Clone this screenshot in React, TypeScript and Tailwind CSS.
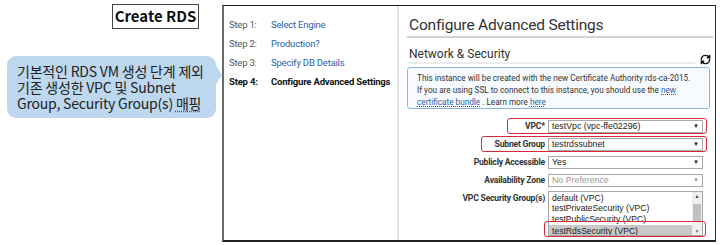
import React from 'react';
import { RefreshCw } from 'lucide-react';

const steps = [
    { label: 'Step 1:', text: 'Select Engine', active: false },
    { label: 'Step 2:', text: 'Production?', active: false },
    { label: 'Step 3:', text: 'Specify DB Details', active: false },
    { label: 'Step 4:', text: 'Configure Advanced Settings', active: true },
];

function Select({ value, disabled }: { value: string; disabled?: boolean }) {
    return (
        <div className="w-[155px] h-[13px] border border-[#a9a9a9] bg-white flex items-center justify-between pl-[3px] pr-[3px]">
            <span className={`text-[8.8px] leading-none font-['Liberation_Sans',Arial,sans-serif] ${disabled ? 'text-[#9a9a9a]' : 'text-[#222]'}`}>{value}</span>
            <span className={`text-[6px] leading-none ${disabled ? 'text-[#999]' : 'text-[#222]'}`}>▼</span>
        </div>
    );
}

function Row({ label, children, mark }: { label: string; children: React.ReactNode; mark?: string }) {
    return (
        <div className="relative flex items-center h-[18px]">
            <div className="w-[141px] pr-[3px] text-right text-[8.6px] font-bold tracking-[-0.2px] text-[#333] font-['Roboto',sans-serif]">
                {label}
            </div>
            {children}
            {mark && <div className={`absolute top-[1px] h-[16px] right-[6px] border border-[#d42b3a] rounded-[3px] ${mark}`} />}
        </div>
    );
}

export default function App() {
    return (
        <div className="w-[720px] h-[245px] bg-white flex overflow-hidden">
            <div className="w-[222px] flex flex-col shrink-0">
                <div className="ml-[112px] mt-[4px] w-[87px] h-[25px] border border-[#444] flex items-center justify-center text-[15px] font-bold text-[#111] font-['Noto_Sans_CJK_KR','Noto_Sans',sans-serif]">
                    Create RDS
                </div>
                <div className="relative ml-[7px] mt-[27px] w-[209px] h-[62px] rounded-[9px] bg-[#bdd7ee] pl-[10px] pt-[7px] text-[14px] leading-[16px] tracking-[-0.2px] text-[#222] font-['Noto_Sans_CJK_KR',sans-serif]">
                    <div>기본적인 RDS VM 생성 단계 제외</div>
                    <div>기존 생성한 VPC 및 Subnet</div>
                    <div>
                        Group, Security Group(s){' '}
                        <span className="underline decoration-dotted decoration-[#e02020] underline-offset-2">매핑</span>
                    </div>
                    <div className="absolute right-[-6px] top-[8px] w-0 h-0 border-y-[11px] border-y-transparent border-l-[7px] border-l-[#bdd7ee]" />
                </div>
            </div>

            <div className="mt-[5px] w-[494px] h-[237px] border-l-2 border-l-[#6b6b6b] border-t border-t-[#222] border-r border-r-[#333] border-b-2 border-b-[#222] flex font-['Roboto',sans-serif]">
                <div className="w-[175px] border-r-2 border-r-[#e4e4e4] pt-[9px] pl-[5px]">
                    {steps.map(s => (
                        <div key={s.label} className="flex items-center h-[19.3px] text-[9.5px] tracking-[-0.2px]">
                            <span className={`w-[42px] ${s.active ? 'font-bold text-[#111]' : 'text-[#555]'}`}>{s.label}</span>
                            <span className={s.active ? 'font-bold text-[#111]' : 'text-[#2b5fa5]'}>{s.text}</span>
                        </div>
                    ))}
                </div>

                <div className="flex-1 pl-[8px] pr-[2px]">
                    <div className="pl-[2px] pt-[9px] pb-[1px] border-b-2 border-b-[#d2d2d2] text-[15.5px] leading-[20px] tracking-[-0.2px] text-[#333]">
                        Configure Advanced Settings
                    </div>

                    <div className="flex items-end mt-[8px]">
                        <div className="flex-1 h-[18px] border-b-2 border-b-[#ececec] pl-[2px] text-[12px] leading-[16px] text-[#333]">
                            Network &amp; Security
                        </div>
                        <RefreshCw className="w-[11px] h-[11px] ml-[5px] mr-[2px] mb-[-1px] text-[#111]" strokeWidth={3.2} />
                    </div>

                    <div className="mt-[3px] w-[303px] h-[42px] border border-[#8db3df] rounded-[3px] bg-[#f7fbff] pl-[9px] pt-[4px] text-[8.2px] leading-[12px] text-[#333]">
                        <div>This instance will be created with the new Certificate Authority rds-ca-2015.</div>
                        <div>
                            If you are using SSL to connect to this instance, you should use the{' '}
                            <span className="text-[#2b5fa5] underline decoration-dotted">new</span>
                        </div>
                        <div>
                            <span className="text-[#2b5fa5] underline decoration-dotted">certificate bundle</span> . Learn more{' '}
                            <span className="text-[#2b5fa5] underline decoration-dotted">here</span>
                        </div>
                    </div>

                    <div className="mt-[8px]">
                        <Row label="VPC*" mark="left-[100px]">
                            <Select value="testVpc (vpc-ffe02296)" />
                        </Row>
                        <Row label="Subnet Group" mark="left-[74px]">
                            <Select value="testrdssubnet" />
                        </Row>
                        <Row label="Publicly Accessible">
                            <Select value="Yes" />
                        </Row>
                        <Row label="Availability Zone">
                            <Select value="No Preference" disabled />
                        </Row>
                        <div className="relative flex items-start mt-[2px]">
                            <div className="w-[141px] pr-[3px] pt-[1px] text-right text-[8.6px] font-bold tracking-[-0.2px] text-[#333]">
                                VPC Security Group(s)
                            </div>
                            <div className="w-[155px] h-[45px] border border-[#a9a9a9] bg-white flex overflow-hidden font-['Liberation_Sans',Arial,sans-serif] text-[8.6px] leading-[10.3px] text-[#222]">
                                <div className="flex-1 pt-[1px]">
                                    <div className="pl-[3px]">default (VPC)</div>
                                    <div className="pl-[3px]">testPrivateSecurity (VPC)</div>
                                    <div className="pl-[3px]">testPublicSecurity (VPC)</div>
                                    <div className="pl-[3px] mt-[1px] h-[12px] leading-[12px] bg-[#c9c9c9]">testRdsSecurity (VPC)</div>
                                </div>
                                <div className="w-[10px] bg-[#f0f0f0] flex flex-col items-center">
                                    <span className="text-[5px] leading-[8px] text-[#333]">▲</span>
                                    <div className="w-[8px] h-[17px] mt-[4px] bg-[#c1c1c1]" />
                                    <span className="mt-auto text-[5px] leading-[8px] text-[#777]">▼</span>
                                </div>
                            </div>
                            <div className="absolute left-[137px] top-[30px] w-[162px] h-[16px] border border-[#d42b3a] rounded-[3px]" />
                        </div>
                    </div>
                </div>
            </div>
        </div>
    );
}
